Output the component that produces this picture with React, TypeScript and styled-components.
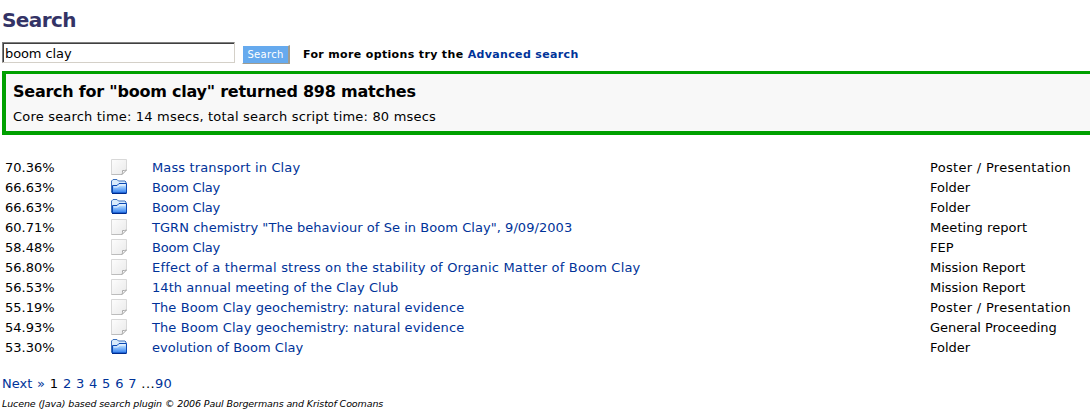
import React from 'react';
import styled, { createGlobalStyle } from 'styled-components';

const Global = createGlobalStyle`
  * { box-sizing: border-box; }
  body {
    margin: 0;
    background: #fff;
    color: #000;
    font: 13px/20px Verdana, "DejaVu Sans", sans-serif;
    overflow: hidden;
  }
`;

const Page = styled.main`
  height: 414px;
  padding: 8px 0 0 2px;
  overflow: hidden;
  white-space: nowrap;
`;

const Title = styled.h1`
  margin: 0;
  color: #333366;
  font-size: 20px;
  line-height: 24px;
  letter-spacing: -0.6px;
`;

const Link = styled.a`
  color: #003399;
  text-decoration: none;
`;

const SearchForm = styled.form`
  display: flex;
  align-items: flex-start;
  height: 29px;
  margin-top: 10px;
`;

const Query = styled.input`
  width: 233px;
  height: 21px;
  padding: 2px 2px 0;
  border: 1px solid;
  border-color: #808080 #d4d0c8 #d4d0c8 #808080;
  box-shadow: inset 1px 1px 0 #404040;
  border-radius: 0;
  outline: none;
  color: #000;
  font: inherit;
  line-height: 17px;
  letter-spacing: -0.1px;
`;

const SubmitButton = styled.button`
  width: 48px;
  height: 19px;
  margin: 3px 0 0 7px;
  padding: 0;
  border: solid;
  border-width: 1px 2px 1px 1px;
  border-color: #fff #9f9c90 #9f9c90 #fff;
  background: #66aaee;
  color: #fff;
  font: 10px/17px Verdana, "DejaVu Sans", sans-serif;
  letter-spacing: 0.3px;
`;

const Hint = styled.div`
  margin: 3px 0 0 13px;
  font-size: 11px;
  font-weight: bold;
  letter-spacing: 0.35px;
`;

const Feedback = styled.section`
  height: 64px;
  padding: 8px 7px 0;
  border: solid #00a000;
  border-width: 3px 0 4px 4px;
  background: #f8f8f8;
`;

const FeedbackTitle = styled.h2`
  margin: 0;
  font-size: 16px;
  line-height: 20px;
  letter-spacing: -0.235px;
`;

const FeedbackText = styled.p`
  margin: 5px 0 0;
  letter-spacing: 0.19px;
`;

const Results = styled.div`
  margin: 23px 0 16px;
  padding-left: 3px;
`;

const ResultRow = styled.div`
  display: grid;
  grid-template-columns: 106px 41px 778px 1fr;
  height: 20px;
`;

const IconCell = styled.span`
  display: flex;
  padding-top: 1px;
`;

const TitleLink = styled(Link)<{ $spacing: number }>`
  letter-spacing: ${(p) => p.$spacing}px;
`;

const Kind = styled.span<{ $spacing: number }>`
  letter-spacing: ${(p) => p.$spacing}px;
`;

const Pager = styled.nav`
  height: 20px;
  word-spacing: 0.65px;
`;

const LastPages = styled.span`
  letter-spacing: 0.4px;
`;

const Credits = styled.footer`
  font-size: 9.5px;
  font-style: italic;
  letter-spacing: -0.11px;
`;

const PageIcon = () => (
  <svg width="16" height="16" viewBox="0 0 16 16">
    <defs>
      <linearGradient id="paper" x1="0" y1="0" x2="1" y2="1">
        <stop offset="0" stopColor="#fdfdfd" />
        <stop offset="1" stopColor="#e9e9e9" />
      </linearGradient>
    </defs>
    <path d="M.5.5h15v10.500l-4.500 4.500H.5z" fill="url(#paper)" stroke="#d8d8d8" />
    <path d="M.5 15.500H11" stroke="#bcbcbc" />
    <path d="M11 15.500q.8-2 .5-4 2 .3 4-.5z" fill="#fff" stroke="#a8a8a8" />
  </svg>
);

const FolderIcon = () => (
  <svg width="16" height="16" viewBox="0 0 16 16">
    <defs>
      <linearGradient id="flap" x1="0" y1="0" x2="0" y2="1">
        <stop offset="0" stopColor="#e4f4ff" />
        <stop offset="0.45" stopColor="#8cc0fa" />
        <stop offset="1" stopColor="#2f7cf0" />
      </linearGradient>
    </defs>
    <path d="M.5 13.500V2L2 .5h4L7.500 2H14l1 1v10.500z" fill="#d9ecfc" stroke="#3d70bc" />
    <path d="M1.500 14V6.500H6l2-2h7.500V14z" fill="url(#flap)" stroke="#0a48b4" />
    <path d="M3 8h3.700l2-2h5.500" fill="none" stroke="#fff" strokeOpacity="0.75" />
    <path d="M1 14.500h14.500" stroke="#002a8c" />
  </svg>
);

type Result = {
  score: string;
  title: string;
  kind: string;
  titleSpacing?: number;
  kindSpacing?: number;
};

const results: Result[] = [
  { score: '70.36%', title: 'Mass transport in Clay', titleSpacing: 0.13, kind: 'Poster / Presentation', kindSpacing: 0.3 },
  { score: '66.63%', title: 'Boom Clay', titleSpacing: -0.22, kind: 'Folder' },
  { score: '66.63%', title: 'Boom Clay', titleSpacing: -0.22, kind: 'Folder' },
  { score: '60.71%', title: 'TGRN chemistry "The behaviour of Se in Boom Clay", 9/09/2003', titleSpacing: 0.05, kind: 'Meeting report', kindSpacing: 0.06 },
  { score: '58.48%', title: 'Boom Clay', titleSpacing: -0.22, kind: 'FEP' },
  { score: '56.80%', title: 'Effect of a thermal stress on the stability of Organic Matter of Boom Clay', titleSpacing: 0.19, kind: 'Mission Report' },
  { score: '56.53%', title: '14th annual meeting of the Clay Club', titleSpacing: 0.06, kind: 'Mission Report' },
  { score: '55.19%', title: 'The Boom Clay geochemistry: natural evidence', titleSpacing: 0.09, kind: 'Poster / Presentation', kindSpacing: 0.3 },
  { score: '54.93%', title: 'The Boom Clay geochemistry: natural evidence', titleSpacing: 0.09, kind: 'General Proceeding', kindSpacing: -0.05 },
  { score: '53.30%', title: 'evolution of Boom Clay', kind: 'Folder' },
];

export default function App() {
  return (
    <Page>
      <Global />
      <Title>Search</Title>
      <SearchForm>
        <Query defaultValue="boom clay" />
        <SubmitButton type="button">Search</SubmitButton>
        <Hint>
          For more options try the <Link>Advanced search</Link>
        </Hint>
      </SearchForm>
      <Feedback>
        <FeedbackTitle>Search for "boom clay" returned 898 matches</FeedbackTitle>
        <FeedbackText>Core search time: 14 msecs, total search script time: 80 msecs</FeedbackText>
      </Feedback>
      <Results>
        {results.map((r, i) => (
          <ResultRow key={i}>
            <span>{r.score}</span>
            <IconCell>{r.kind === 'Folder' ? <FolderIcon /> : <PageIcon />}</IconCell>
            <TitleLink $spacing={r.titleSpacing ?? 0}>{r.title}</TitleLink>
            <Kind $spacing={r.kindSpacing ?? 0}>{r.kind}</Kind>
          </ResultRow>
        ))}
      </Results>
      <Pager>
        <Link>Next »</Link> 1 <Link>2</Link> <Link>3</Link> <Link>4</Link> <Link>5</Link>{' '}
        <Link>6</Link> <Link>7</Link>{' '}
        <LastPages>
          ...<Link>90</Link>
        </LastPages>
      </Pager>
      <Credits>Lucene (Java) based search plugin © 2006 Paul Borgermans and Kristof Coomans</Credits>
    </Page>
  );
}
